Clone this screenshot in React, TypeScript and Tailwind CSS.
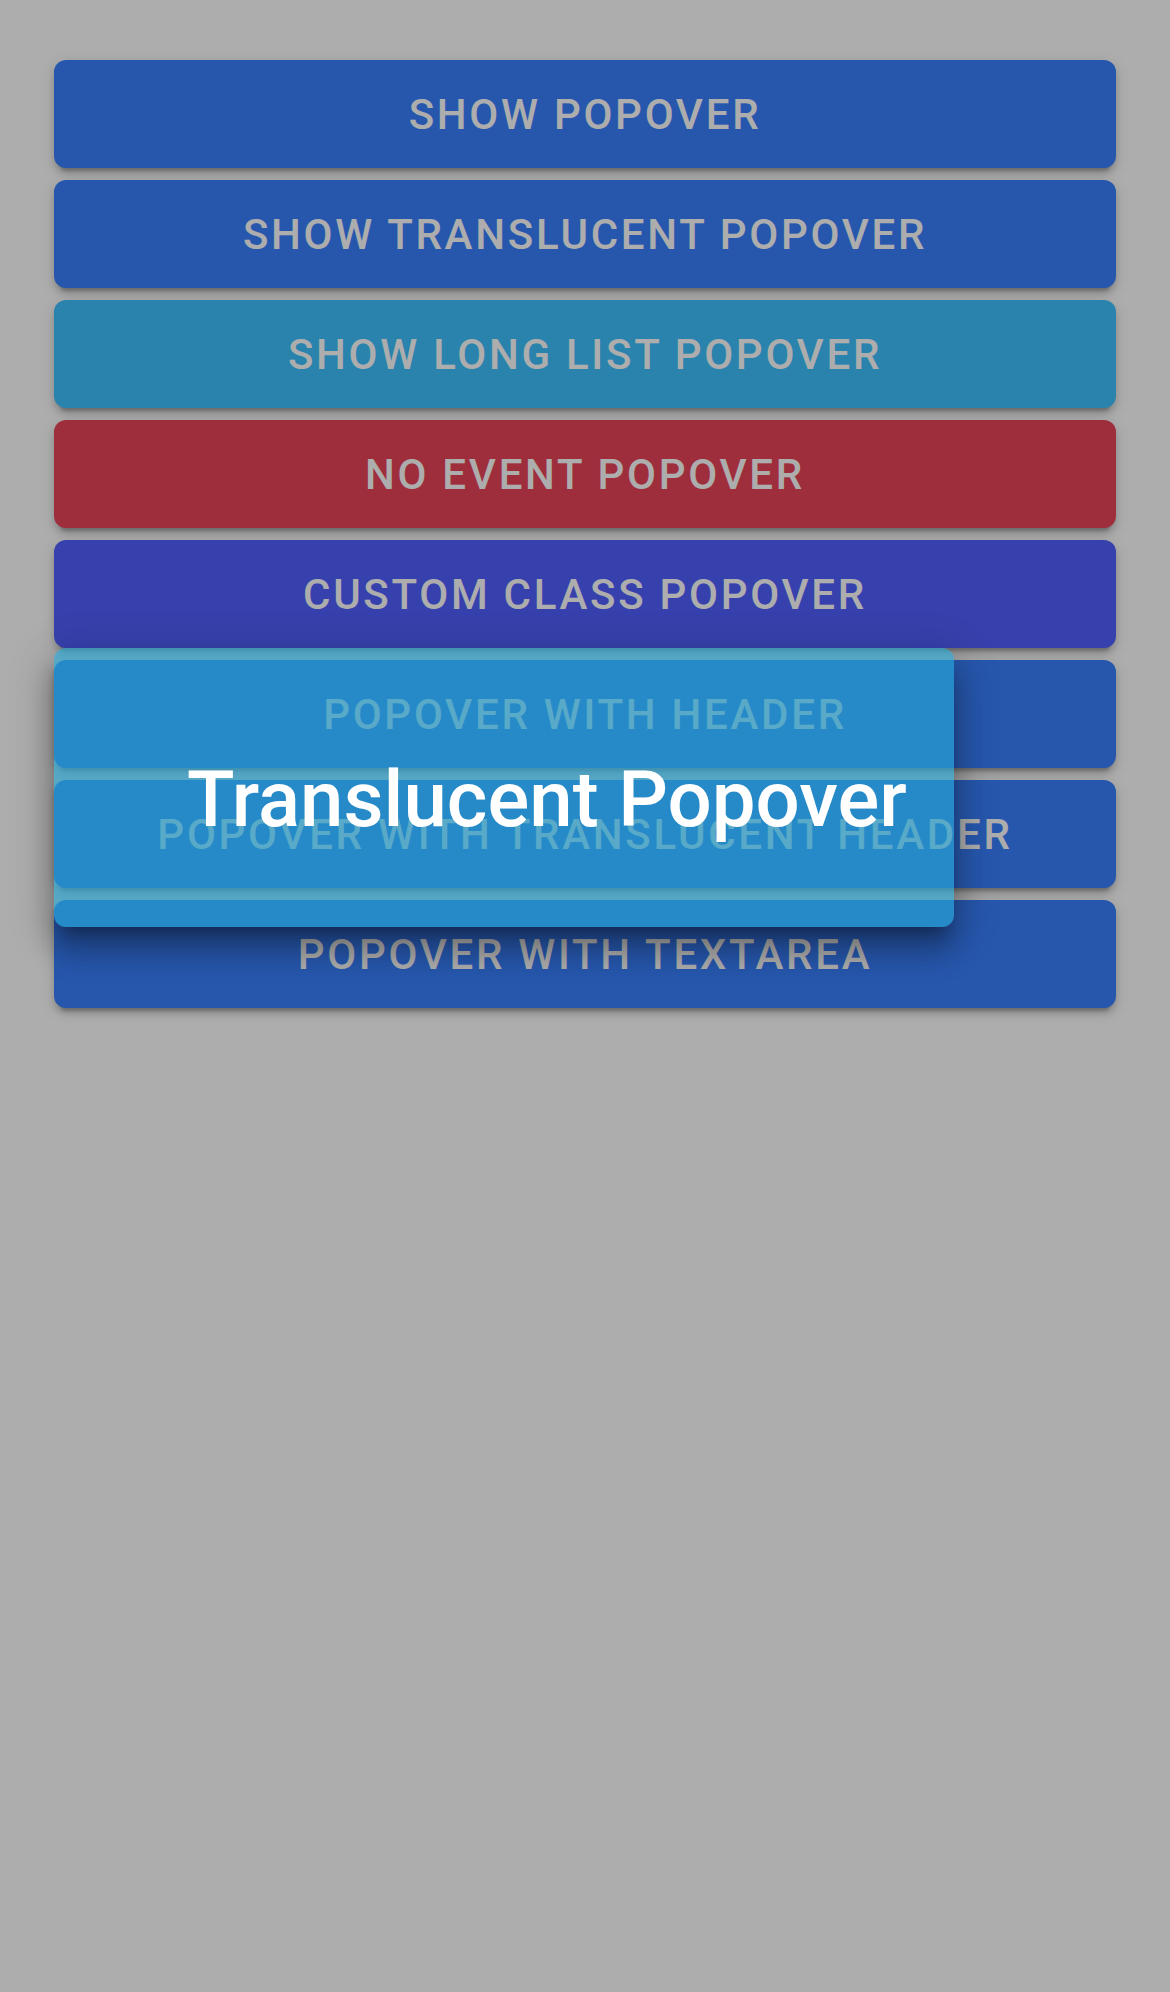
import React from 'react';

const buttons = [
    { label: 'Show Popover', color: 'bg-[#3880ff]' },
    { label: 'Show Translucent Popover', color: 'bg-[#3880ff]' },
    { label: 'Show Long List Popover', color: 'bg-[#3dc2ff]' },
    { label: 'No Event Popover', color: 'bg-[#eb445a]' },
    { label: 'Custom Class Popover', color: 'bg-[#5260ff]' },
    { label: 'Popover With Header', color: 'bg-[#3880ff]' },
    { label: 'Popover With Translucent Header', color: 'bg-[#3880ff]' },
    { label: 'Popover With Textarea', color: 'bg-[#3880ff]' },
];

export default function App() {
    return (
        <div className="relative min-h-screen bg-white" style={{ fontFamily: 'Roboto, "Noto Sans", sans-serif' }}>
            {/* Page */}
            <div className="flex flex-col gap-3 pt-[60px] px-[54px]">
                {buttons.map((b) => (
                    <button
                        key={b.label}
                        className={`${b.color} h-[108px] w-full rounded-[12px] flex items-center justify-center text-white text-[42px] font-medium uppercase tracking-[0.065em] shadow-[0_9px_3px_-6px_rgba(0,0,0,0.2),0_6px_6px_0_rgba(0,0,0,0.14),0_3px_15px_0_rgba(0,0,0,0.12)]`}
                    >
                        {b.label}
                    </button>
                ))}
            </div>

            {/* Backdrop */}
            <div className="fixed inset-0 bg-black/[0.32]" />

            {/* Popover */}
            <div className="absolute left-[54px] top-[648px] w-[900px] h-[279px] rounded-[12px] bg-[rgba(38,168,216,0.63)] shadow-[0_15px_15px_-9px_rgba(0,0,0,0.3),0_24px_30px_3px_rgba(0,0,0,0.22),0_9px_42px_6px_rgba(0,0,0,0.18)] pt-[113px] pl-[133px]">
                <h1 className="text-white text-[78px] leading-[78px] font-medium whitespace-nowrap">Translucent Popover</h1>
            </div>
        </div>
    );
}
